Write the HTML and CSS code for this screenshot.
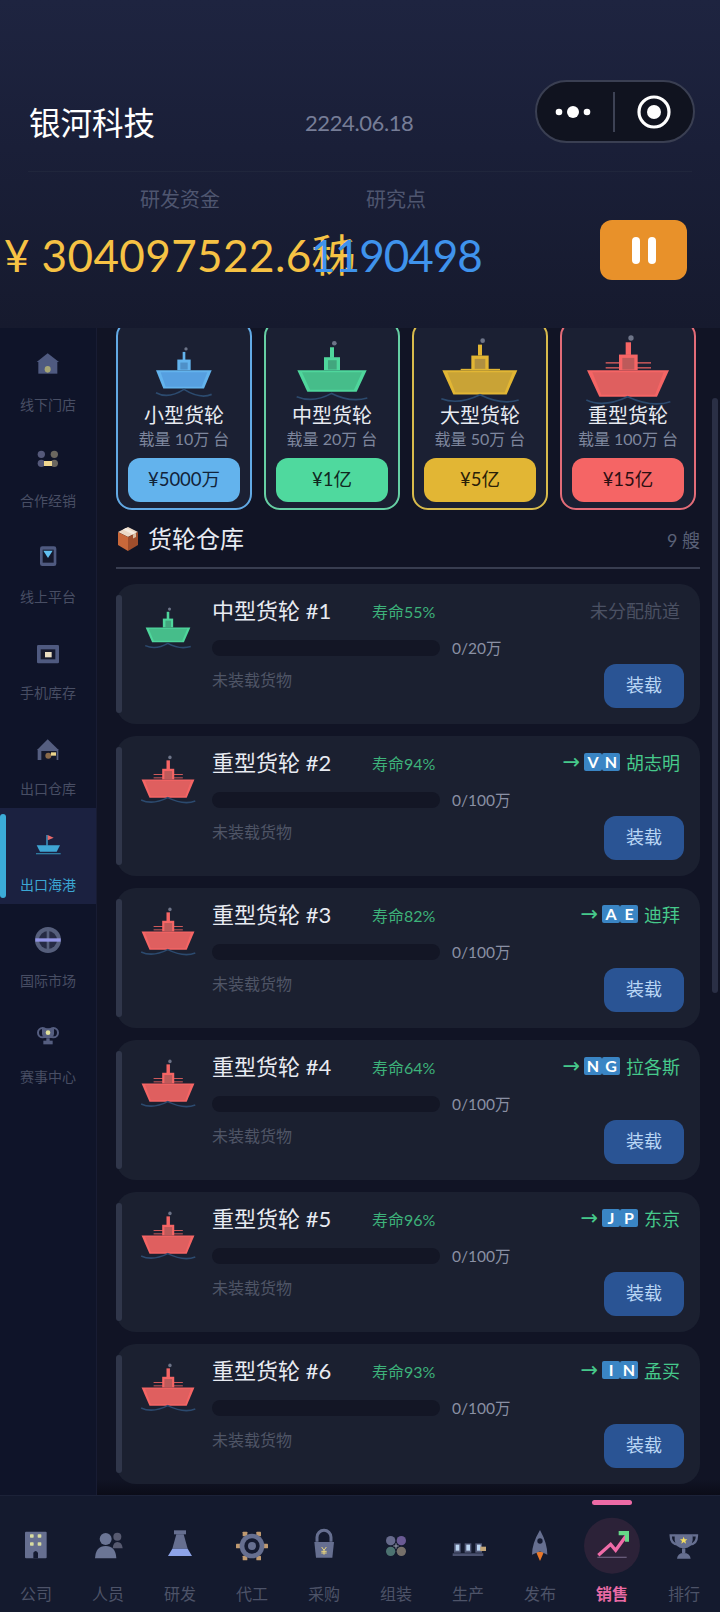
FILE: index.html
```html
<!DOCTYPE html>
<html lang="zh">
<head>
<meta charset="utf-8">
<title>银河科技</title>
<link rel="stylesheet" href="styles.css">
</head>
<body>
<svg class="defs" aria-hidden="true">
  <symbol id="ship-sm" viewBox="117 40 270 220" preserveAspectRatio="none">
    <circle cx="258" cy="88" r="5" fill="#6d7488"/>
    <rect x="248" y="97" width="8" height="25" fill="#63b3ed"/>
    <rect x="232" y="120" width="40" height="32" fill="#63b3ed"/>
    <rect x="241" y="129" width="22" height="21" fill="#4f90c8"/>
    <polygon points="168,152 335,152 312,207 190,207" fill="#63b3ed"/>
    <polygon points="182,158 322,158 305,202 197,202" fill="#569fe0"/>
    <path d="M168 220 Q205 240 252 210 Q300 240 335 225" fill="none" stroke="#2c4a6e"/>
  </symbol>
  <symbol id="ship-md" viewBox="561 40 270 220" preserveAspectRatio="none">
    <circle cx="703" cy="71" r="7" fill="#6d7488"/>
    <rect x="690" y="83" width="12" height="32" fill="#4fd69c"/>
    <rect x="672" y="113" width="48" height="39" fill="#4fd69c"/>
    <rect x="684" y="122" width="26" height="28" fill="#42a67e"/>
    <polygon points="592,152 800,152 770,217 622,217" fill="#4fd69c"/>
    <polygon points="606,158 786,158 762,211 630,211" fill="#46bd8a"/>
    <path d="M590 232 Q640 252 695 222 Q750 250 802 236" fill="none" stroke="#2c4a6e"/>
  </symbol>
  <symbol id="ship-lg" viewBox="105 40 270 220" preserveAspectRatio="none">
    <circle cx="248" cy="63" r="7" fill="#6d7488"/>
    <rect x="234" y="75" width="12" height="33" fill="#e2b634"/>
    <rect x="214" y="108" width="52" height="44" fill="#e2b634"/>
    <rect x="224" y="118" width="32" height="32" fill="#b09040"/>
    <rect x="182" y="148" width="118" height="4" fill="#e2b634"/>
    <polygon points="127,152 352,152 320,225 160,225" fill="#e2b634"/>
    <polygon points="142,158 338,158 314,219 166,219" fill="#c9a336"/>
    <path d="M124 238 Q175 258 240 226 Q305 258 356 242" fill="none" stroke="#2c4a6e"/>
  </symbol>
  <symbol id="ship-hv" viewBox="548 40 270 220" preserveAspectRatio="none">
    <circle cx="692" cy="55" r="8" fill="#6d7488"/>
    <rect x="676" y="68" width="16" height="38" fill="#f56565"/>
    <rect x="616" y="128" width="136" height="4" fill="#e05f5f"/>
    <rect x="616" y="143" width="136" height="4" fill="#e05f5f"/>
    <rect x="656" y="105" width="56" height="47" fill="#f56565"/>
    <rect x="666" y="115" width="36" height="35" fill="#bd5a5a"/>
    <polygon points="560,152 806,152 770,232 597,232" fill="#f56565"/>
    <polygon points="576,158 790,158 764,226 603,226" fill="#df5f5f"/>
    <path d="M558 242 Q610 266 682 232 Q755 266 810 247" fill="none" stroke="#2c4a6e"/>
  </symbol>
</svg>

<div class="app">
  <header class="header">
    <div class="capsule">
      <svg class="capsule-dots" viewBox="0 0 36 12"><circle cx="4" cy="6" r="3.3" fill="#fff"/><circle cx="18" cy="6" r="6" fill="#fff"/><circle cx="32" cy="6" r="3.3" fill="#fff"/></svg>
      <span class="capsule-rule"></span>
      <svg class="capsule-target" viewBox="0 0 34 34"><circle cx="17" cy="17" r="15" fill="none" stroke="#fff" stroke-width="3.2"/><circle cx="17" cy="17" r="7" fill="#fff"/></svg>
    </div>
    <div class="title-row">
      <h1 class="company">银河科技</h1>
      <span class="date">2224.06.18</span>
    </div>
    <div class="stats">
      <div class="stat">
        <span class="stat-label">研发资金</span>
        <span class="stat-value money">¥ 304097522.6秭</span>
      </div>
      <div class="stat">
        <span class="stat-label">研究点</span>
        <span class="stat-value points">1190498</span>
      </div>
      <button class="pause" aria-label="暂停"><i></i><i></i></button>
    </div>
  </header>

  <main class="main">
    <nav class="side">
      <a class="side-item">
        <svg class="side-icon" viewBox="84 42 120 120"><polygon points="143,70 177,96 110,96" fill="#4f5a80"/><rect x="115" y="95" width="57" height="36" fill="#4f5a80"/><ellipse cx="143" cy="118" rx="9" ry="10" fill="#a7a675"/></svg>
        <span>线下门店</span>
      </a>
      <a class="side-item">
        <svg class="side-icon" viewBox="84 330 120 120"><circle cx="124" cy="373" r="11" fill="#55597a"/><circle cx="163" cy="373" r="11" fill="#6b675f"/><circle cx="124" cy="400" r="11" fill="#55597a"/><circle cx="163" cy="400" r="11" fill="#6b675f"/><rect x="132" y="393" width="24" height="15" fill="#f0d890"/></svg>
        <span>合作经销</span>
      </a>
      <a class="side-item">
        <svg class="side-icon" viewBox="84 618 120 120"><rect x="120" y="649" width="49" height="59" rx="7" fill="#4f5a80"/><rect x="128" y="659" width="33" height="39" fill="#14182c"/><polygon points="130,662 158,662 144,684" fill="#62c0f0"/></svg>
        <span>线上平台</span>
      </a>
      <a class="side-item">
        <svg class="side-icon" viewBox="84 906 120 120"><rect x="111" y="945" width="66" height="55" rx="4" fill="#4f5a80"/><rect x="122" y="958" width="44" height="30" fill="#14182c"/><rect x="135" y="966" width="20" height="16" fill="#e8dcc0"/></svg>
        <span>手机库存</span>
      </a>
      <a class="side-item">
        <svg class="side-icon" viewBox="84 54 120 120"><polygon points="143,88 176,120 111,120" fill="#555e80"/><rect x="113" y="118" width="62" height="32" fill="#555e80"/><rect x="124" y="123" width="46" height="27" fill="#14182c"/><circle cx="145" cy="137" r="9" fill="#8a6a4a"/><rect x="153" y="127" width="15" height="10" fill="#ecd58c"/></svg>
        <span>出口仓库</span>
      </a>
      <a class="side-item active">
        <svg class="side-icon" viewBox="84 342 120 120"><rect x="139" y="375" width="4" height="32" fill="#3fa6d4"/><polygon points="143,375 161,383 143,391" fill="#e96a6a"/><polygon points="110,406 180,406 170,425 120,425" fill="#3fa6d4"/><rect x="108" y="429" width="74" height="4" fill="#2f7aa0"/></svg>
        <span>出口海港</span>
      </a>
      <a class="side-item">
        <svg class="side-icon" viewBox="84 630 120 120"><circle cx="144" cy="690" r="39" fill="#565f7c"/><circle cx="144" cy="690" r="27" fill="#262b44"/><rect x="140" y="655" width="8" height="70" fill="#565f7c"/><rect x="106" y="685" width="76" height="10" fill="#9194e4"/></svg>
        <span>国际市场</span>
      </a>
      <a class="side-item">
        <svg class="side-icon" viewBox="84 918 120 120"><circle cx="128" cy="968" r="14" fill="none" stroke="#555e80" stroke-width="6"/><circle cx="160" cy="968" r="14" fill="none" stroke="#555e80" stroke-width="6"/><path d="M126 955 H162 V972 Q160 985 144 985 Q128 985 126 972Z" fill="#555e80"/><circle cx="144" cy="968" r="7" fill="#dfe09a"/><rect x="139" y="985" width="10" height="8" fill="#555e80"/><rect x="130" y="992" width="28" height="11" fill="#555e80"/></svg>
        <span>赛事中心</span>
      </a>
    </nav>

    <section class="content">
      <div class="scrollbar"></div>
      <div class="shop">
        <article class="product sm">
          <svg class="ship-hero"><use href="#ship-sm"/></svg>
          <h3>小型货轮</h3>
          <p>载量 10万 台</p>
          <button>¥5000万</button>
        </article>
        <article class="product md">
          <svg class="ship-hero"><use href="#ship-md"/></svg>
          <h3>中型货轮</h3>
          <p>载量 20万 台</p>
          <button>¥1亿</button>
        </article>
        <article class="product lg">
          <svg class="ship-hero"><use href="#ship-lg"/></svg>
          <h3>大型货轮</h3>
          <p>载量 50万 台</p>
          <button>¥5亿</button>
        </article>
        <article class="product hv">
          <svg class="ship-hero"><use href="#ship-hv"/></svg>
          <h3>重型货轮</h3>
          <p>载量 100万 台</p>
          <button>¥15亿</button>
        </article>
      </div>

      <div class="section-head">
        <svg class="box-icon" viewBox="0 0 20 24"><polygon points="10,0 20,5 10,10 0,5" fill="#ecd9c6"/><polygon points="0,5 10,10 10,24 0,18" fill="#c9683a"/><polygon points="20,5 10,10 10,24 20,18" fill="#a04e2c"/><polygon points="5,2.5 8,1 18,6 15,7.5" fill="#f6ece0"/><polygon points="15,7.5 18,6 18,10 15,11.5" fill="#dcbfa4"/></svg>
        <h2>货轮仓库</h2>
        <span class="count">9 艘</span>
      </div>

      <div class="fleet">
        <article class="vessel md-ship">
          <svg class="ship-row"><use href="#ship-md"/></svg>
          <div class="vessel-body">
            <div class="vessel-top">
              <span class="vessel-name">中型货轮 #1</span>
              <span class="life">寿命55%</span>
              <span class="route none">未分配航道</span>
            </div>
            <div class="cargo-bar"><span class="track"></span><span class="load">0/20万</span></div>
            <div class="vessel-foot"><span class="empty">未装载货物</span><button class="load-btn">装载</button></div>
          </div>
        </article>
        <article class="vessel">
          <svg class="ship-row"><use href="#ship-hv"/></svg>
          <div class="vessel-body">
            <div class="vessel-top">
              <span class="vessel-name">重型货轮 #2</span>
              <span class="life">寿命94%</span>
              <span class="route"><span class="arrow">→</span><span class="flag"><b>V</b><b>N</b></span>胡志明</span>
            </div>
            <div class="cargo-bar"><span class="track"></span><span class="load">0/100万</span></div>
            <div class="vessel-foot"><span class="empty">未装载货物</span><button class="load-btn">装载</button></div>
          </div>
        </article>
        <article class="vessel">
          <svg class="ship-row"><use href="#ship-hv"/></svg>
          <div class="vessel-body">
            <div class="vessel-top">
              <span class="vessel-name">重型货轮 #3</span>
              <span class="life">寿命82%</span>
              <span class="route"><span class="arrow">→</span><span class="flag"><b>A</b><b>E</b></span>迪拜</span>
            </div>
            <div class="cargo-bar"><span class="track"></span><span class="load">0/100万</span></div>
            <div class="vessel-foot"><span class="empty">未装载货物</span><button class="load-btn">装载</button></div>
          </div>
        </article>
        <article class="vessel">
          <svg class="ship-row"><use href="#ship-hv"/></svg>
          <div class="vessel-body">
            <div class="vessel-top">
              <span class="vessel-name">重型货轮 #4</span>
              <span class="life">寿命64%</span>
              <span class="route"><span class="arrow">→</span><span class="flag"><b>N</b><b>G</b></span>拉各斯</span>
            </div>
            <div class="cargo-bar"><span class="track"></span><span class="load">0/100万</span></div>
            <div class="vessel-foot"><span class="empty">未装载货物</span><button class="load-btn">装载</button></div>
          </div>
        </article>
        <article class="vessel">
          <svg class="ship-row"><use href="#ship-hv"/></svg>
          <div class="vessel-body">
            <div class="vessel-top">
              <span class="vessel-name">重型货轮 #5</span>
              <span class="life">寿命96%</span>
              <span class="route"><span class="arrow">→</span><span class="flag"><b>J</b><b>P</b></span>东京</span>
            </div>
            <div class="cargo-bar"><span class="track"></span><span class="load">0/100万</span></div>
            <div class="vessel-foot"><span class="empty">未装载货物</span><button class="load-btn">装载</button></div>
          </div>
        </article>
        <article class="vessel">
          <svg class="ship-row"><use href="#ship-hv"/></svg>
          <div class="vessel-body">
            <div class="vessel-top">
              <span class="vessel-name">重型货轮 #6</span>
              <span class="life">寿命93%</span>
              <span class="route"><span class="arrow">→</span><span class="flag"><b>I</b><b>N</b></span>孟买</span>
            </div>
            <div class="cargo-bar"><span class="track"></span><span class="load">0/100万</span></div>
            <div class="vessel-foot"><span class="empty">未装载货物</span><button class="load-btn">装载</button></div>
          </div>
        </article>
      </div>
    </section>
  </main>

  <footer class="tabs">
    <a class="tab">
      <svg class="tab-icon" viewBox="36 123 144 144"><rect x="75" y="155" width="65" height="80" rx="3" fill="#666f90"/><rect x="90" y="163" width="11" height="10" rx="2" fill="#d8dca0"/><rect x="113" y="163" width="11" height="10" rx="2" fill="#d8dca0"/><rect x="90" y="187" width="11" height="10" rx="2" fill="#d8dca0"/><rect x="113" y="187" width="11" height="10" rx="2" fill="#d8dca0"/><path d="M100 235 V218 Q107 208 114 218 V235Z" fill="#141a30"/></svg>
      <span>公司</span>
    </a>
    <a class="tab">
      <svg class="tab-icon" viewBox="252 123 144 144"><circle cx="352" cy="170" r="12" fill="#575a70"/><path d="M338 205 Q340 186 352 186 Q366 186 368 205Z" fill="#575a70"/><circle cx="317" cy="177" r="18" fill="#6b7595"/><path d="M285 235 Q287 198 317 198 Q347 198 349 235Z" fill="#6b7595"/></svg>
      <span>人员</span>
    </a>
    <a class="tab">
      <svg class="tab-icon" viewBox="468 123 144 144"><rect x="522" y="151" width="36" height="12" fill="#666f90"/><polygon points="529,163 551,163 563,206 517,206" fill="#666f90"/><polygon points="517,206 563,206 576,228 504,228" fill="#8da3e8"/></svg>
      <span>研发</span>
    </a>
    <a class="tab">
      <svg class="tab-icon" viewBox="684 123 144 144"><rect x="708" y="191" width="14" height="14" rx="2" fill="#c09a70"/><rect x="790" y="191" width="14" height="14" rx="2" fill="#c09a70"/><rect x="728" y="155" width="14" height="14" rx="2" fill="#c09a70"/><rect x="769" y="155" width="14" height="14" rx="2" fill="#c09a70"/><rect x="728" y="227" width="14" height="14" rx="2" fill="#c09a70"/><rect x="769" y="227" width="14" height="14" rx="2" fill="#c09a70"/><circle cx="756" cy="198" r="37" fill="#666f90"/><circle cx="756" cy="198" r="23" fill="#141a30"/><circle cx="756" cy="198" r="12" fill="#666f90"/></svg>
      <span>代工</span>
    </a>
    <a class="tab">
      <svg class="tab-icon" viewBox="900 123 144 144"><path d="M951 185 V172 A21 21 0 0 1 993 172 V185" fill="none" stroke="#666f90" stroke-width="9"/><polygon points="943,186 1002,186 997,233 948,233" fill="#666f90"/><path d="M965 201 L972 211 L979 201 M972 211 V224 M964 214 H980 M964 219 H980" fill="none" stroke="#e8d47c" stroke-width="3"/></svg>
      <span>采购</span>
    </a>
    <a class="tab">
      <svg class="tab-icon" viewBox="36 123 144 144"><circle cx="92" cy="182" r="14" fill="#666a8c"/><circle cx="124" cy="182" r="14" fill="#6a5a94"/><circle cx="92" cy="214" r="14" fill="#4c7270"/><circle cx="124" cy="214" r="14" fill="#76706a"/><path d="M108 190 V206 M100 198 H116" stroke="#9aa0b0" stroke-width="3"/></svg>
      <span>组装</span>
    </a>
    <a class="tab">
      <svg class="tab-icon" viewBox="252 123 144 144"><rect x="278" y="220" width="92" height="8" fill="#4b5270"/><rect x="282" y="190" width="20" height="28" fill="#535a78"/><rect x="314" y="190" width="20" height="28" fill="#535a78"/><rect x="346" y="190" width="20" height="28" fill="#535a78"/><rect x="287" y="194" width="11" height="18" fill="#bcd6f2"/><rect x="319" y="194" width="11" height="18" fill="#bcd6f2"/><rect x="351" y="194" width="11" height="18" fill="#bcd6f2"/><rect x="361" y="200" width="17" height="13" fill="#c4a678"/></svg>
      <span>生产</span>
    </a>
    <a class="tab">
      <svg class="tab-icon" viewBox="468 123 144 144"><polygon points="528,215 552,215 540,243" fill="#e8782a"/><path d="M540 150 Q562 190 562 224 L540 214 L516 224 Q516 190 540 150Z" fill="#666f90"/><circle cx="540" cy="183" r="8" fill="#141a30"/></svg>
      <span>发布</span>
    </a>
    <a class="tab current">
      <svg class="tab-icon" viewBox="684 123 144 144"><circle cx="756" cy="197" r="84" fill="#2c2238"/><rect x="712" y="230" width="88" height="4" fill="#665a78"/><path d="M715 226 L752 193 L767 211 L798 168" fill="none" stroke="#ef6ca8" stroke-width="10"/><polygon points="776,153 807,153 807,185 795,185 795,166 776,166" fill="#66d888"/></svg>
      <span>销售</span>
    </a>
    <a class="tab">
      <svg class="tab-icon" viewBox="900 123 144 144"><path d="M945 166 H932 Q932 194 955 194" fill="none" stroke="#666f90" stroke-width="7"/><path d="M997 166 H1011 Q1011 194 988 194" fill="none" stroke="#666f90" stroke-width="7"/><path d="M944 163 H998 V180 Q996 205 971 205 Q946 205 944 180Z" fill="#666f90"/><polygon points="971,170 974,178 982,178 976,183 978,191 971,186 964,191 966,183 960,178 968,178" fill="#f2dc60"/><rect x="966" y="205" width="10" height="14" fill="#666f90"/><path d="M951 236 Q953 219 971 219 Q990 219 992 236Z" fill="#666f90"/></svg>
      <span>排行</span>
    </a>
  </footer>
</div>
</body>
</html>
```

FILE: styles.css
```css
* { box-sizing: border-box; margin: 0; padding: 0; }
html, body { width: 720px; height: 1612px; overflow: hidden; }
body {
  background: #111425;
  font-family: "Lato", "Noto Sans CJK SC", sans-serif;
  color: #e6e9f2;
}
button { font-family: inherit; border: 0; cursor: pointer; }
a { display: block; }
.defs { position: absolute; width: 0; height: 0; }

.app { width: 720px; height: 1612px; display: flex; flex-direction: column; overflow: hidden; }

/* header */
.header {
  position: relative;
  height: 328px;
  flex: none;
  padding-top: 108px;
  background: linear-gradient(180deg, #1e2440 0, #1a1f38 45%, #161a2e 100%);
}
.capsule {
  position: absolute;
  left: 535px;
  top: 80px;
  width: 160px;
  height: 63px;
  display: flex;
  align-items: center;
  border: 2px solid #3a3f52;
  border-radius: 32px;
  background: #10131f;
}
.capsule-dots { width: 36px; height: 12px; margin-left: 18px; }
.capsule-rule { width: 2px; height: 40px; margin-left: 22px; background: #3d4254; }
.capsule-target { width: 34px; height: 34px; margin-left: 22px; }
.title-row { display: flex; align-items: center; height: 30px; padding-left: 29px; }
.company { width: 276px; font-size: 31.5px; line-height: 30px; font-weight: 400; color: #fff; }
.date { font-size: 22px; line-height: 30px; letter-spacing: -0.4px; color: #767d97; }
.stats {
  display: flex;
  height: 114px;
  margin: 33px 28px 0;
  padding: 16px 5px 0 44px;
  border-top: 1px solid #20263c;
}
.stat { width: 216px; display: flex; flex-direction: column; align-items: center; flex: none; }
.stat-label { font-size: 20px; line-height: 22px; color: #4f5670; white-space: nowrap; }
.stat-value { margin-top: 15px; font-size: 44px; line-height: 60px; white-space: nowrap; }
.money { color: #f6c244; letter-spacing: 0.4px; }
.points { color: #3f93ec; letter-spacing: -1px; }
.pause {
  align-self: flex-end;
  margin: 0 0 5px auto;
  width: 87px;
  height: 60px;
  border-radius: 12px;
  background: #e8912a;
  display: flex;
  align-items: center;
  justify-content: center;
  gap: 8px;
}
.pause i { width: 8px; height: 27px; border-radius: 4px; background: #fff; }

/* main */
.main { flex: 1; display: flex; min-height: 0; }
.side { width: 97px; flex: none; background: #0f1429; border-right: 1px solid #181c33; }
.side-item {
  display: flex;
  flex-direction: column;
  align-items: center;
  height: 96px;
  padding-top: 16px;
  position: relative;
  color: #484e64;
  font-size: 14px;
}
.side-icon { width: 40px; height: 40px; }
.side-item span { margin-top: 9px; line-height: 24px; }
.side-item.active { background: #1b2140; color: #3ba7d3; }
.side-item.active::before {
  content: "";
  position: absolute;
  left: 0;
  top: 6px;
  width: 6px;
  height: 84px;
  border-radius: 3px;
  background: #3bacd8;
}

.content {
  flex: 1;
  position: relative;
  overflow: hidden;
  padding: 0 20px 0 19px;
  background: linear-gradient(180deg, #111425 0, #111425 calc(100% - 16px), #0b0c18 100%);
}
.scrollbar {
  position: absolute;
  right: 2px;
  top: 70px;
  width: 6px;
  height: 595px;
  border-radius: 3px;
  background: #2a2f45;
}

.shop {
  display: grid;
  grid-template-columns: repeat(4, 136px);
  gap: 12px;
  margin-top: -8px;
}
.product {
  height: 190px;
  padding: 11px 10px 6px;
  border: 2px solid;
  border-radius: 16px;
  background: #1b2033;
  display: flex;
  flex-direction: column;
  align-items: center;
}
.product h3 { font-size: 20px; line-height: 26px; font-weight: 400; color: #e8ebf2; white-space: nowrap; }
.product p { font-size: 16px; line-height: 22px; color: #7e869d; white-space: nowrap; }
.product button {
  margin-top: 8px;
  width: 112px;
  height: 44px;
  flex: none;
  padding-bottom: 4px;
  border-radius: 12px;
  font-size: 18.5px;
}
.ship-hero { width: 90px; height: 73px; margin-bottom: -4px; flex: none; stroke-width: 5; }
.product.sm { border-color: #62a9e4; }
.product.sm button { background: #63b3ed; color: #12233a; }
.product.md { border-color: #66cfa4; }
.product.md button { background: #4fd99e; color: #10281f; }
.product.lg { border-color: #d8bb4c; }
.product.lg button { background: #e2b634; color: #2a2008; }
.product.hv { border-color: #e36c78; }
.product.hv button { background: #f56565; color: #2c0f12; }

.section-head {
  display: flex;
  align-items: center;
  height: 59px;
  padding: 12px 0 11px 2px;
  border-bottom: 2px solid #383d50;
}
.box-icon { width: 20px; height: 24px; margin-right: 10px; }
.section-head h2 { font-size: 24px; line-height: 34px; font-weight: 400; color: #e8ebf2; }
.count { margin-left: auto; font-size: 18px; color: #5a6177; }

.fleet { display: flex; flex-direction: column; gap: 12px; margin-top: 15px; }
.vessel {
  position: relative;
  height: 140px;
  flex: none;
  display: flex;
  padding: 0 16px 0 23px;
  border-radius: 20px;
  background: #1b2030;
}
.vessel::before {
  content: "";
  position: absolute;
  left: 0;
  top: 11px;
  bottom: 11px;
  width: 6px;
  border-radius: 3px;
  background: #30364a;
}
.ship-row { width: 58px; height: 50px; margin: 18px 15px 0 0; flex: none; stroke-width: 7; }
.vessel-body { flex: 1; min-width: 0; padding-top: 13px; }
.vessel-top { display: flex; align-items: center; height: 28px; }
.vessel-name { width: 160px; font-size: 22px; line-height: 28px; color: #e8ebf2; white-space: nowrap; }
.life { font-size: 16px; color: #3db27a; }
.route { display: flex; align-items: center; margin: 0 4px 2px auto; font-size: 18px; color: #46c98b; }
.route.none { color: #4b5163; }
.arrow { font-family: "DejaVu Sans", sans-serif; font-size: 21px; line-height: 20px; margin: 0 4px 0 0; color: #46c98b; }
.flag { display: flex; margin-right: 6px; }
.flag b {
  width: 18px;
  height: 18px;
  border-radius: 2px;
  background: #3a85c4;
  color: #fff;
  font-size: 16px;
  line-height: 18px;
  text-align: center;
}
.cargo-bar { display: flex; align-items: center; height: 16px; margin-top: 15px; gap: 12px; }
.track { width: 228px; height: 16px; border-radius: 8px; background: #131625; }
.load { margin-bottom: 2px; font-size: 15.5px; color: #8a90a4; }
.vessel-foot { display: flex; justify-content: space-between; margin-top: 8px; }
.empty { font-size: 16px; line-height: 31px; color: #4f5566; }
.load-btn {
  width: 80px;
  height: 44px;
  padding-bottom: 4px;
  border-radius: 12px;
  background: #2a5494;
  color: #b9d6f5;
  font-size: 18px;
}

/* bottom tabs */
.tabs {
  height: 117px;
  flex: none;
  display: grid;
  grid-template-columns: repeat(10, 72px);
  background: #141a2e;
  border-top: 1px solid #1c2238;
}
.tab {
  position: relative;
  display: flex;
  flex-direction: column;
  align-items: center;
  padding-top: 25px;
  font-size: 16px;
  color: #4d5368;
}
.tab-icon { width: 48px; height: 48px; overflow: visible; }
.tab span { position: relative; margin-top: 13px; line-height: 24px; }
.tab.current { color: #e86aa4; font-weight: 700; }
.tab.current::before {
  content: "";
  position: absolute;
  left: 16px;
  top: 4px;
  width: 40px;
  height: 5px;
  border-radius: 3px;
  background: #ec6aa5;
}
```
